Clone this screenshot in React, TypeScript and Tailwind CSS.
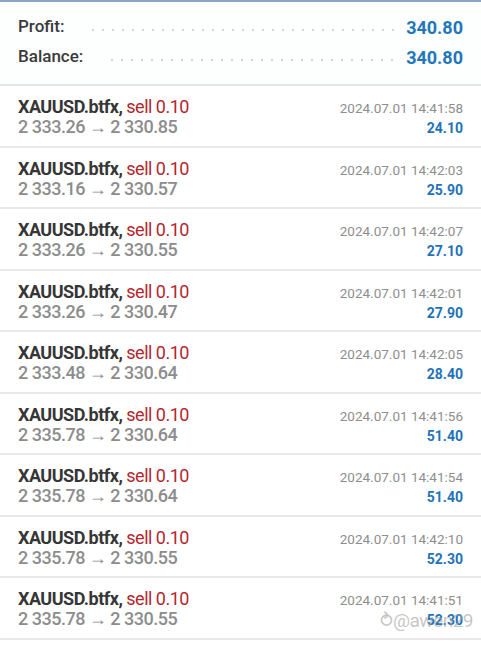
import React from "react";

const trades = [
  { open: "2 333.26", close: "2 330.85", time: "2024.07.01 14:41:58", profit: "24.10" },
  { open: "2 333.16", close: "2 330.57", time: "2024.07.01 14:42:03", profit: "25.90" },
  { open: "2 333.26", close: "2 330.55", time: "2024.07.01 14:42:07", profit: "27.10" },
  { open: "2 333.26", close: "2 330.47", time: "2024.07.01 14:42:01", profit: "27.90" },
  { open: "2 333.48", close: "2 330.64", time: "2024.07.01 14:42:05", profit: "28.40" },
  { open: "2 335.78", close: "2 330.64", time: "2024.07.01 14:41:56", profit: "51.40" },
  { open: "2 335.78", close: "2 330.64", time: "2024.07.01 14:41:54", profit: "51.40" },
  { open: "2 335.78", close: "2 330.55", time: "2024.07.01 14:42:10", profit: "52.30" },
  { open: "2 335.78", close: "2 330.55", time: "2024.07.01 14:41:51", profit: "52.30" },
];

function SummaryRow({ label, value }: { label: string; value: string }) {
  return (
    <div className="flex items-center h-[30px]">
      <span className="text-[17px] font-medium text-[#3a3a3a]">{label}</span>
      <span className="flex-1 ml-6 mr-[4px] mt-[6px] h-[4px] bg-[radial-gradient(circle,#d4d4d4_1px,transparent_1.4px)] bg-[length:10px_4px]" />
      <span className="w-[60px] text-right text-[18px] font-bold text-[#2277bb]">{value}</span>
    </div>
  );
}

export default function App() {
  return (
    <div
      className="w-[481px] h-[650px] overflow-hidden bg-white"
      style={{ fontFamily: "Roboto, 'Liberation Sans', sans-serif" }}
    >
      <div className="h-[2px] bg-[#8aa5c6]" />
      <div className="px-[18px] pt-[10px] pb-[12px] bg-[#fdfefe] flex flex-col">
        <SummaryRow label="Profit:" value="340.80" />
        <SummaryRow label="Balance:" value="340.80" />
      </div>
      <div className="border-t-2 border-[#e6e6e6]">
        {trades.map((t, i) => (
          <div key={i} className="relative h-[61.5px] border-b-2 border-[#e8e8e8] px-[18px] pt-[11px] flex justify-between">
            <div className="flex flex-col leading-[20px] tracking-[-0.5px]">
              <div className="text-[18px]">
                <span className="font-bold text-[#363636]">XAUUSD.btfx, </span>
                <span className="text-[#b3272f]">sell 0.10</span>
              </div>
              <div className="text-[18px] font-medium text-[#8c8c8c]">
                {t.open} → {t.close}
              </div>
            </div>
            <div className="flex flex-col items-end pt-[2px]">
              <span className="text-[13.5px] text-[#8e8e8e] leading-[19px]">{t.time}</span>
              <span className="text-[14px] font-bold text-[#1f73b8] leading-[20px]">{t.profit}</span>
            </div>
            {i === trades.length - 1 && (
              <span className="absolute right-[8px] top-[29px] text-[19px] text-[#a0a0a0]/60 tracking-[-0.5px]">
                ⥁@awen29
              </span>
            )}
          </div>
        ))}
      </div>
    </div>
  );
}
